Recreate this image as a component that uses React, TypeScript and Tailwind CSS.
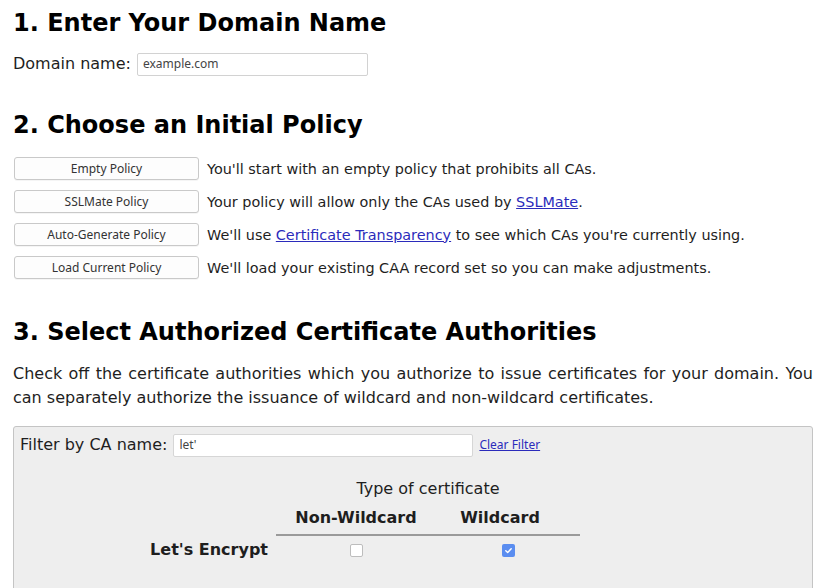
import React from "react";

const small = { fontFamily: '"Noto Sans", "Open Sans", sans-serif' };

function PolicyRow({ label, children }: { label: string; children: React.ReactNode }) {
  return (
    <div className="flex items-center h-[33px]">
      <button
        className="w-[185px] h-[23px] ml-px border border-[#c9c9c9] rounded-[3px] bg-[#fdfdfd] text-[12px] text-[#333] leading-none shadow-[0_1px_0_rgba(0,0,0,0.04)]"
        style={small}
      >
        {label}
      </button>
      <span className="ml-2 text-[14.4px]">{children}</span>
    </div>
  );
}

function Box({ checked }: { checked?: boolean }) {
  return checked ? (
    <span className="inline-flex w-[13px] h-[13px] rounded-[2px] bg-[#5a8df0] items-center justify-center">
      <svg width="9" height="9" viewBox="0 0 10 10">
        <path d="M2 5.2 L4.1 7.2 L8 3" stroke="white" strokeWidth="1.6" fill="none" strokeLinecap="round" strokeLinejoin="round" />
      </svg>
    </span>
  ) : (
    <span className="inline-block w-[13px] h-[13px] rounded-[2px] border border-[#bdbdbd] bg-white" />
  );
}

export default function App() {
  return (
    <div
      className="w-[840px] h-[588px] overflow-hidden bg-white text-[#1e1e1e] text-[16px] leading-[24px] px-[13px]"
      style={{ fontFamily: '"DejaVu Sans", Verdana, sans-serif' }}
    >
      <h1 className="text-[24px] leading-[30px] font-bold text-black pt-[8px]">1. Enter Your Domain Name</h1>
      <div className="flex items-center mt-[14px] h-[24px]">
        <span>Domain name:</span>
        <input
          className="ml-[6px] w-[231px] h-[23px] border border-[#d2d2d2] rounded-[2px] px-[5px] text-[12px] text-[#444] bg-white outline-none"
          style={small}
          defaultValue="example.com"
        />
      </div>

      <h1 className="text-[24px] leading-[30px] font-bold text-black mt-[34px]">2. Choose an Initial Policy</h1>
      <div className="mt-[12px]">
        <PolicyRow label="Empty Policy">You'll start with an empty policy that prohibits all CAs.</PolicyRow>
        <PolicyRow label="SSLMate Policy">
          Your policy will allow only the CAs used by <a className="text-[#2b2bbb] underline">SSLMate</a>.
        </PolicyRow>
        <PolicyRow label="Auto-Generate Policy">
          We'll use <a className="text-[#2b2bbb] underline">Certificate Transparency</a> to see which CAs you're currently using.
        </PolicyRow>
        <PolicyRow label="Load Current Policy">
          We'll load your existing CAA record set so you can make adjustments.
        </PolicyRow>
      </div>

      <h1 className="text-[24px] leading-[30px] font-bold text-black mt-[33px]">3. Select Authorized Certificate Authorities</h1>
      <p className="mt-[15px] w-[800px] text-justify">
        Check off the certificate authorities which you authorize to issue certificates for your domain. You can separately authorize the issuance of wildcard and non-wildcard certificates.
      </p>

      <div className="mt-[16px] w-[800px] h-[200px] border border-[#c4c4c4] rounded-[3px] bg-[#eeeeee] px-[6px] pt-[6px]">
        <div className="flex items-center h-[24px]">
          <span>Filter by CA name:</span>
          <input
            className="ml-[6px] w-[300px] h-[23px] border border-[#d6d6d6] rounded-[2px] px-[5px] text-[12px] text-[#444] bg-white outline-none"
            style={small}
            defaultValue="let'"
          />
          <a className="ml-[6px] text-[12px] text-[#2b2bbb] underline" style={small}>Clear Filter</a>
        </div>

        <div className="flex mt-[20px]">
          <div className="w-[256px] shrink-0" />
          <div className="w-[304px] text-center">Type of certificate</div>
        </div>
        <div className="flex mt-[5px] font-bold">
          <div className="w-[256px] shrink-0" />
          <div className="w-[304px] flex border-b-2 border-[#9a9a9a] pb-[4px]">
            <div className="w-[160px] text-center">Non-Wildcard</div>
            <div className="w-[128px] text-center">Wildcard</div>
          </div>
        </div>
        <div className="flex mt-[2px] h-[24px] items-center">
          <div className="w-[248px] shrink-0 text-right font-bold">Let's Encrypt</div>
          <div className="w-[8px]" />
          <div className="w-[160px] flex justify-center"><Box /></div>
          <div className="w-[144px] flex justify-center"><Box checked /></div>
        </div>
      </div>
    </div>
  );
}
